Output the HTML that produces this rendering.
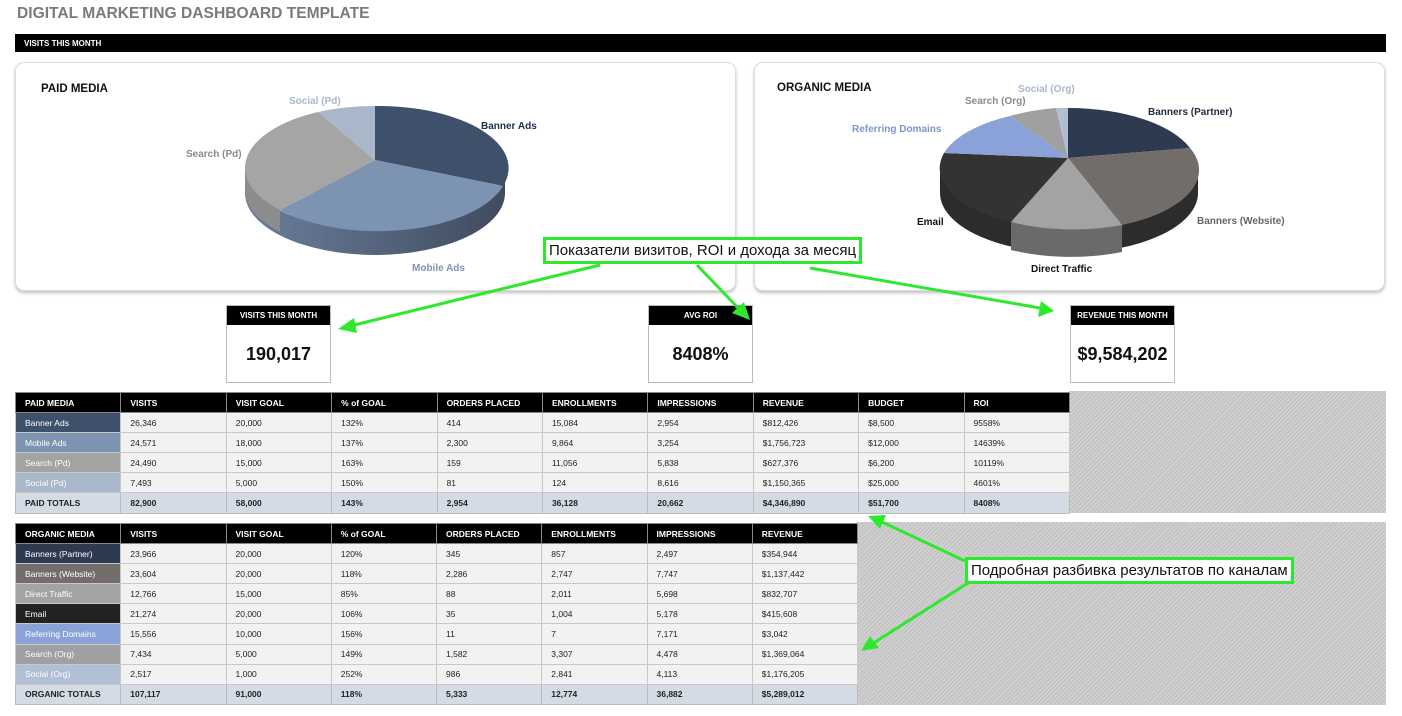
<!DOCTYPE html>
<html><head><meta charset="utf-8"><style>
*{margin:0;padding:0;box-sizing:border-box}
body{width:1402px;height:716px;background:#fff;font-family:"Liberation Sans",sans-serif;position:relative;overflow:hidden}
.abs{position:absolute}
.title{left:17px;top:5px;font-size:15.6px;font-weight:bold;color:#7a7a7a}
.bar{left:15px;top:34px;width:1371px;height:18px;background:#000;color:#fff;font-size:8px;font-weight:bold;padding:5px 0 0 9px}
.card{background:#fff;border:1px solid #ddd;border-radius:9px;box-shadow:0 2px 3px rgba(0,0,0,.25)}
.ct{font-size:11.5px;font-weight:bold;color:#111}
.kpi{border:1px solid #bbb;background:#fff;width:105px;height:78px}
.kpi .h{background:#000;color:#fff;font-size:8px;font-weight:bold;text-align:center;height:19px;line-height:19px}
.kpi .v{font-size:18px;font-weight:bold;text-align:center;line-height:58px;color:#111}
.hatch{background:repeating-linear-gradient(135deg,#c4c4c4 0 2px,#d6d6d6 2px 3px)}
table{position:absolute;border-collapse:collapse;table-layout:fixed;font-size:8.5px;color:#222}
td{height:20.1px;border:1px solid #c8c8c8;padding-left:9px;background:#f2f2f2;white-space:nowrap;overflow:hidden}
tr.hd td{background:#000;color:#fff;font-weight:bold;border-color:#888}
tr.tot td{background:#d5dbe5;font-weight:bold;border-color:#bbb}
td.l{color:#fff}
.lab{font-size:10px;font-weight:bold;position:absolute;white-space:nowrap}
.note{position:absolute;border:3px solid #2ee82e;background:#fff;font-size:15px;color:#111;padding:2px 3px;white-space:nowrap}
</style></head><body>
<div class="abs title">DIGITAL MARKETING DASHBOARD TEMPLATE</div>
<div class="abs bar">VISITS THIS MONTH</div>

<div class="abs card" style="left:15px;top:62px;width:721px;height:229px"></div>
<div class="abs ct" style="left:41px;top:83px">PAID MEDIA</div>
<div class="abs card" style="left:754px;top:62px;width:631px;height:229px"></div>
<div class="abs ct" style="left:777px;top:82px">ORGANIC MEDIA</div>

<svg class="abs" style="left:0;top:0" width="1402" height="716">
<defs><linearGradient id="sg" x1="0" x2="1"><stop offset="0" stop-color="#6a7e9c"/><stop offset="0.5" stop-color="#55657d"/><stop offset="1" stop-color="#3f4b5e"/></linearGradient></defs>
<path d="M245,168 L245,193 A130 62 0 0 0 505,193 L505,168 A130 62 0 0 1 245,168Z" fill="url(#sg)"/>
<path d="M245,168 L245,193 A130 62 0 0 0 280,232 L280,207Z" fill="#8c8c8c"/>
<path d="M375,160 L375,106 A130 62 0 0 1 503,186 Z" fill="#3f506a"/>
<path d="M375,160 L503,186 A130 62 0 0 1 280,210 Z" fill="#7c93b2"/>
<path d="M375,160 L280,210 A130 62 0 0 1 318,112 Z" fill="#a5a5a5"/>
<path d="M375,160 L318,112 A130 62 0 0 1 375,106 Z" fill="#aab6c9"/>
<path d="M940,168 L940,193 A129 60 0 0 0 1198,193 L1198,168 A129 60 0 0 1 940,168Z" fill="#2c2c2c"/>
<path d="M1011,222 L1011,250 A129 60 0 0 0 1122,252 L1122,224 A129 60 0 0 1 1011,222Z" fill="#6a6a6a"/>
<path d="M1068,158 L1068,108 A129 60 0 0 1 1190,148 Z" fill="#2e3a4f"/>
<path d="M1068,158 L1190,148 A129 60 0 0 1 1122,225 Z" fill="#726c6b"/>
<path d="M1068,158 L1122,225 A129 60 0 0 1 1011,222 Z" fill="#a3a3a3"/>
<path d="M1068,158 L1011,222 A129 60 0 0 1 944,153 Z" fill="#353232"/>
<path d="M1068,158 L944,153 A129 60 0 0 1 1010,116 Z" fill="#8aa2d8"/>
<path d="M1068,158 L1010,116 A129 60 0 0 1 1056,108 Z" fill="#a0a0a0"/>
<path d="M1068,158 L1056,108 A129 60 0 0 1 1068,108 Z" fill="#b1bfd4"/>
</svg>
<div class="lab" style="left:289px;top:96px;color:#a9b7cb">Social (Pd)</div>
<div class="lab" style="left:481px;top:121px;color:#1f2d4a">Banner Ads</div>
<div class="lab" style="left:186px;top:149px;color:#8a8a8a">Search (Pd)</div>
<div class="lab" style="left:412px;top:263px;color:#7d93b2">Mobile Ads</div>
<div class="lab" style="left:1018px;top:84px;color:#a9b7cb">Social (Org)</div>
<div class="lab" style="left:965px;top:96px;color:#8a8a8a">Search (Org)</div>
<div class="lab" style="left:852px;top:124px;color:#7d95c9">Referring Domains</div>
<div class="lab" style="left:1148px;top:107px;color:#1f2a3a">Banners (Partner)</div>
<div class="lab" style="left:1197px;top:216px;color:#6b6564">Banners (Website)</div>
<div class="lab" style="left:917px;top:217px;color:#111">Email</div>
<div class="lab" style="left:1031px;top:264px;color:#111">Direct Traffic</div>

<div class="abs kpi" style="left:226px;top:305px"><div class="h">VISITS THIS MONTH</div><div class="v">190,017</div></div>
<div class="abs kpi" style="left:648px;top:305px"><div class="h">AVG ROI</div><div class="v">8408%</div></div>
<div class="abs kpi" style="left:1070px;top:305px"><div class="h">REVENUE THIS MONTH</div><div class="v">$9,584,202</div></div>

<div class="abs hatch" style="left:1069px;top:391px;width:317px;height:122px"></div>
<div class="abs hatch" style="left:857px;top:522px;width:529px;height:183px"></div>

<table style="left:15px;top:392px;width:1054px">
<colgroup><col span="10" style="width:105.4px"></colgroup>
<tr class="hd"><td>PAID MEDIA</td><td>VISITS</td><td>VISIT GOAL</td><td>% of GOAL</td><td>ORDERS PLACED</td><td>ENROLLMENTS</td><td>IMPRESSIONS</td><td>REVENUE</td><td>BUDGET</td><td>ROI</td></tr>
<tr><td class="l" style="background:#3f506a">Banner Ads</td><td>26,346</td><td>20,000</td><td>132%</td><td>414</td><td>15,084</td><td>2,954</td><td>$812,426</td><td>$8,500</td><td>9558%</td></tr>
<tr><td class="l" style="background:#7c93b2">Mobile Ads</td><td>24,571</td><td>18,000</td><td>137%</td><td>2,300</td><td>9,864</td><td>3,254</td><td>$1,756,723</td><td>$12,000</td><td>14639%</td></tr>
<tr><td class="l" style="background:#a3a3a3">Search (Pd)</td><td>24,490</td><td>15,000</td><td>163%</td><td>159</td><td>11,056</td><td>5,838</td><td>$627,376</td><td>$6,200</td><td>10119%</td></tr>
<tr><td class="l" style="background:#a9b7cb">Social (Pd)</td><td>7,493</td><td>5,000</td><td>150%</td><td>81</td><td>124</td><td>8,616</td><td>$1,150,365</td><td>$25,000</td><td>4601%</td></tr>
<tr class="tot"><td>PAID TOTALS</td><td>82,900</td><td>58,000</td><td>143%</td><td>2,954</td><td>36,128</td><td>20,662</td><td>$4,346,890</td><td>$51,700</td><td>8408%</td></tr>
</table>

<table style="left:15px;top:523px;width:842px">
<colgroup><col span="8" style="width:105.25px"></colgroup>
<tr class="hd"><td>ORGANIC MEDIA</td><td>VISITS</td><td>VISIT GOAL</td><td>% of GOAL</td><td>ORDERS PLACED</td><td>ENROLLMENTS</td><td>IMPRESSIONS</td><td>REVENUE</td></tr>
<tr><td class="l" style="background:#2e3a4f">Banners (Partner)</td><td>23,966</td><td>20,000</td><td>120%</td><td>345</td><td>857</td><td>2,497</td><td>$354,944</td></tr>
<tr><td class="l" style="background:#726c6b">Banners (Website)</td><td>23,604</td><td>20,000</td><td>118%</td><td>2,286</td><td>2,747</td><td>7,747</td><td>$1,137,442</td></tr>
<tr><td class="l" style="background:#a3a3a3">Direct Traffic</td><td>12,766</td><td>15,000</td><td>85%</td><td>88</td><td>2,011</td><td>5,698</td><td>$832,707</td></tr>
<tr><td class="l" style="background:#222">Email</td><td>21,274</td><td>20,000</td><td>106%</td><td>35</td><td>1,004</td><td>5,178</td><td>$415,608</td></tr>
<tr><td class="l" style="background:#8aa2d8">Referring Domains</td><td>15,556</td><td>10,000</td><td>156%</td><td>11</td><td>7</td><td>7,171</td><td>$3,042</td></tr>
<tr><td class="l" style="background:#a0a0a0">Search (Org)</td><td>7,434</td><td>5,000</td><td>149%</td><td>1,582</td><td>3,307</td><td>4,478</td><td>$1,369,064</td></tr>
<tr><td class="l" style="background:#b1bfd4">Social (Org)</td><td>2,517</td><td>1,000</td><td>252%</td><td>986</td><td>2,841</td><td>4,113</td><td>$1,176,205</td></tr>
<tr class="tot"><td>ORGANIC TOTALS</td><td>107,117</td><td>91,000</td><td>118%</td><td>5,333</td><td>12,774</td><td>36,882</td><td>$5,289,012</td></tr>
</table>

<svg class="abs" style="left:0;top:0" width="1402" height="716">
<g stroke="#2ee82e" stroke-width="3" fill="#2ee82e">
<line x1="600" y1="265" x2="350" y2="326"/><polygon points="338,329 354,318 357,333" stroke="none"/>
<line x1="697" y1="265" x2="742" y2="312"/><polygon points="750,320 732,313 744,302" stroke="none"/>
<line x1="810" y1="268" x2="1040" y2="308"/><polygon points="1054,311 1038,317 1041,301" stroke="none"/>
<line x1="965" y1="561" x2="880" y2="521"/><polygon points="868,516 886,515 880,529" stroke="none"/>
<line x1="968" y1="583" x2="872" y2="644"/><polygon points="861,651 870,636 879,648" stroke="none"/>
</g>
</svg>
<div class="note" style="left:543px;top:237px">Показатели визитов, ROI и дохода за месяц</div>
<div class="note" style="left:965px;top:557px">Подробная разбивка результатов по каналам</div>
</body></html>
